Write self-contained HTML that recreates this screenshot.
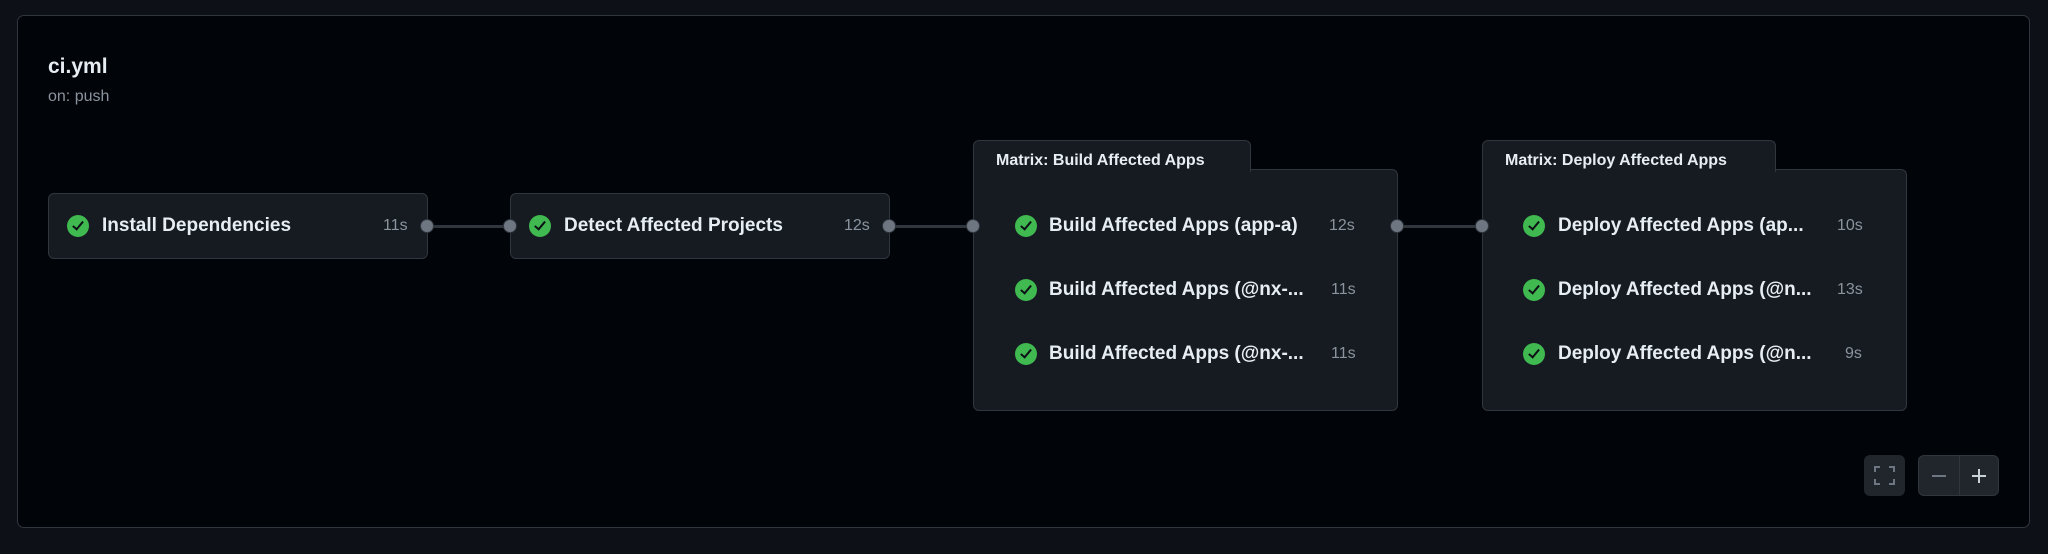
<!DOCTYPE html>
<html><head><meta charset="utf-8"><style>
*{box-sizing:border-box;margin:0;padding:0}
body{width:2048px;height:554px;background:#0d1117;font-family:"Liberation Sans",sans-serif;position:relative;overflow:hidden;color:#e6edf3}
.panel{position:absolute;left:17px;top:15px;width:2013px;height:513px;background:#010409;border:1px solid #30363d;border-radius:7px}
.abs{position:absolute}
.node{position:absolute;background:#161b22;border:1px solid #30363d;border-radius:6px}
.t{position:absolute;font-size:19px;font-weight:bold;color:#e6edf3;white-space:nowrap;line-height:24px}
.d{position:absolute;font-size:16px;color:#8b949e;line-height:24px}
.ck{position:absolute;width:22px;height:22px;border-radius:50%;background:#3fb950}
.ck:after{content:"";position:absolute;left:8px;top:4px;width:4px;height:9px;border:solid #0d1117;border-width:0 2px 2px 0;transform:rotate(40deg)}
.dot{position:absolute;width:14px;height:14px;border-radius:50%;background:#6e7681;border:1.5px solid #30363d}
.ln{position:absolute;height:3px;background:#30363d}
.tab{position:absolute;background:#161b22;border:1px solid #30363d;border-bottom:none;border-radius:6px 6px 0 0;font-size:16px;color:#e6edf3;padding:10px 0 0 22px;font-weight:600;line-height:20px}
</style></head><body>
<div class="panel"></div>
<div class="abs" style="left:48px;top:55px;font-size:21px;font-weight:bold">ci.yml</div>
<div class="abs" style="left:48px;top:88px;font-size:16px;color:#8b949e">on: push</div>

<div class="ln" style="left:427px;top:225px;width:83px"></div>
<div class="ln" style="left:889px;top:225px;width:84px"></div>
<div class="ln" style="left:1397px;top:225px;width:85px"></div>

<div class="node" style="left:48px;top:193px;width:380px;height:66px"></div>
<div class="ck" style="left:67px;top:215px"></div>
<div class="t" style="left:102px;top:214px">Install Dependencies</div>
<div class="d" style="left:383px;top:214px">11s</div>

<div class="node" style="left:510px;top:193px;width:380px;height:66px"></div>
<div class="ck" style="left:529px;top:215px"></div>
<div class="t" style="left:564px;top:214px">Detect Affected Projects</div>
<div class="d" style="left:844px;top:214px">12s</div>

<div class="node" style="left:973px;top:169px;width:425px;height:242px;border-top-left-radius:0"></div>
<div class="tab" style="left:973px;top:140px;width:278px;height:32px">Matrix: Build Affected Apps</div>
<div class="ck" style="left:1015px;top:215px"></div><div class="t" style="left:1049px;top:214px">Build Affected Apps (app-a)</div><div class="d" style="left:1329px;top:214px">12s</div>
<div class="ck" style="left:1015px;top:279px"></div><div class="t" style="left:1049px;top:278px">Build Affected Apps (@nx-...</div><div class="d" style="left:1331px;top:278px">11s</div>
<div class="ck" style="left:1015px;top:343px"></div><div class="t" style="left:1049px;top:342px">Build Affected Apps (@nx-...</div><div class="d" style="left:1331px;top:342px">11s</div>

<div class="node" style="left:1482px;top:169px;width:425px;height:242px;border-top-left-radius:0"></div>
<div class="tab" style="left:1482px;top:140px;width:294px;height:32px">Matrix: Deploy Affected Apps</div>
<div class="ck" style="left:1523px;top:215px"></div><div class="t" style="left:1558px;top:214px">Deploy Affected Apps (ap...</div><div class="d" style="left:1837px;top:214px">10s</div>
<div class="ck" style="left:1523px;top:279px"></div><div class="t" style="left:1558px;top:278px">Deploy Affected Apps (@n...</div><div class="d" style="left:1837px;top:278px">13s</div>
<div class="ck" style="left:1523px;top:343px"></div><div class="t" style="left:1558px;top:342px">Deploy Affected Apps (@n...</div><div class="d" style="left:1845px;top:342px">9s</div>

<div class="dot" style="left:420px;top:219px"></div>
<div class="dot" style="left:503px;top:219px"></div>
<div class="dot" style="left:882px;top:219px"></div>
<div class="dot" style="left:966px;top:219px"></div>
<div class="dot" style="left:1390px;top:219px"></div>
<div class="dot" style="left:1475px;top:219px"></div>

<div class="abs" style="left:1864px;top:455px;width:41px;height:41px;background:#21262d;border-radius:6px">
<svg width="41" height="41" viewBox="0 0 41 41" fill="none" stroke="#6e7681" stroke-width="2"><path d="M11 17v-5h5M25 12h5v5M30 24v5h-5M16 29h-5v-5"/></svg></div>
<div class="abs" style="left:1918px;top:455px;width:81px;height:41px;background:#21262d;border-radius:6px;border:1px solid #30363d">
<div class="abs" style="left:40px;top:0;width:1px;height:39px;background:#30363d"></div>
<svg class="abs" style="left:0;top:0" width="80" height="40" viewBox="0 0 80 40" fill="none" stroke-width="2"><path d="M13 20h14" stroke="#6e7681"/><path d="M53 20h14M60 13v14" stroke="#c9d1d9"/></svg></div>
</body></html>
